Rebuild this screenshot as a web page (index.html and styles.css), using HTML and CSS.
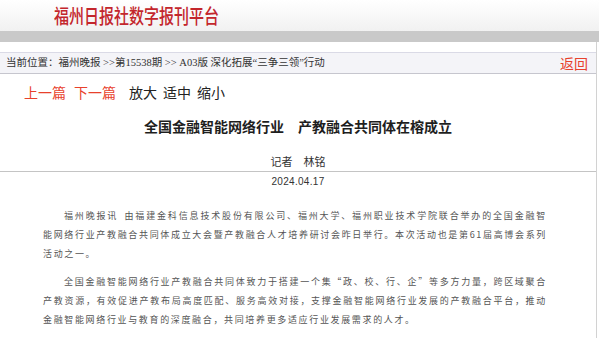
FILE: index.html
```html
<!DOCTYPE html>
<html lang="zh-CN">
<head>
<meta charset="utf-8">
<title>福州日报社数字报刊平台</title>
<link rel="stylesheet" href="styles.css">
</head>
<body>
<header class="masthead">
  <h1 class="logo">福州日报社数字报刊平台</h1>
</header>
<div class="graybar"></div>
<main class="main">
  <div class="spacer"></div>
  <nav class="crumbs">
    <span class="path">当前位置：福州晚报 &gt;&gt;第15538期 &gt;&gt; A03版 深化拓展“三争三领”行动</span>
    <a class="back" href="#">返回</a>
  </nav>
  <div class="tools">
    <a class="red prev" href="#">上一篇</a>
    <a class="red next" href="#">下一篇</a>
    <a class="size" href="#">放大</a>
    <a class="size" href="#">适中</a>
    <a class="size" href="#">缩小</a>
  </div>
  <article class="article">
    <h2 class="title">全国金融智能网络行业　产教融合共同体在榕成立</h2>
    <p class="author">记者　林铭</p>
    <hr class="rule">
    <p class="date">2024.04.17</p>
    <div class="content">
      <p>福州晚报讯&#8194;由福建金科信息技术股份有限公司、福州大学、福州职业技术学院联合举办的全国金融智能网络行业产教融合共同体成立大会暨产教融合人才培养研讨会昨日举行。本次活动也是第61届高博会系列活动之一。</p>
      <p>全国金融智能网络行业产教融合共同体致力于搭建一个集“政、校、行、企”等多方力量，跨区域聚合产教资源，有效促进产教布局高度匹配、服务高效对接，支撑金融智能网络行业发展的产教融合平台，推动金融智能网络行业与教育的深度融合，共同培养更多适应行业发展需求的人才。</p>
    </div>
  </article>
</main>
</body>
</html>
```
FILE: styles.css
```css
* { box-sizing: border-box; }
html, body { margin: 0; padding: 0; background: #fff; }
body {
  width: 599px;
  height: 339px;
  overflow: hidden;
  font-family: "Noto Sans CJK SC", sans-serif;
}
a { text-decoration: none; }

.masthead {
  height: 31px;
  background: linear-gradient(#ffffff, #f1f1f1);
  display: flex;
  align-items: center;
  padding-left: 54px;
}
.logo {
  margin: 0;
  font-size: 20px;
  line-height: 24px;
  font-weight: 500;
  color: #c3262c;
  white-space: nowrap;
  transform: scaleX(0.75);
  transform-origin: left center;
}
.graybar {
  height: 11px;
  background: #c9c9c9;
}

.main {
  width: 597px;
  border-right: 1px solid #d2d2d2;
  height: 296px;
}
.spacer {
  height: 11px;
  border-bottom: 1px solid #dadae6;
}
.crumbs {
  height: 21px;
  background: #f4f4f8;
  border-bottom: 1px solid #c6c6ce;
  display: flex;
  align-items: center;
  justify-content: space-between;
  padding: 0 8px 0 6px;
}
.path {
  font-family: "Liberation Serif", "Noto Sans CJK SC", serif;
  font-size: 10.5px;
  line-height: 20px;
  color: #333;
  white-space: nowrap;
}
.back {
  font-size: 14px;
  line-height: 20px;
  color: #e8412c;
}

.tools {
  display: flex;
  padding: 8px 0 0 24px;
  font-size: 14px;
  line-height: 20px;
}
.tools a { color: #222; }
.tools .red { color: #e8412c; }
.tools .prev { margin-right: 8px; }
.tools .next { margin-right: 13px; }
.tools .size { margin-right: 6px; }

.article { padding: 0; }
.title {
  margin: 14px 0 0;
  text-align: center;
  font-size: 14px;
  line-height: 20px;
  font-weight: 700;
  color: #1e1e1e;
}
.author {
  margin: 17px 0 0;
  text-align: center;
  font-size: 11px;
  line-height: 16px;
  color: #333;
}
.rule {
  margin: 2px 0 0;
  border: 0;
  border-top: 1px solid #c4c4c4;
  height: 0;
}
.date {
  margin: 3px 0 0;
  text-align: center;
  font-family: "Liberation Sans", sans-serif;
  font-size: 10px;
  line-height: 14px;
  letter-spacing: 0.3px;
  color: #333;
}
.content {
  margin: 17px 0 0 43px;
  width: 504px;
}
.content p {
  margin: 0 0 9px;
  font-family: "Noto Sans CJK SC", sans-serif;
  font-size: 9px;
  line-height: 19px;
  letter-spacing: 1.65px;
  text-indent: 21px;
  text-align: justify;
  text-spacing-trim: space-all;
  color: #555;
}
```
